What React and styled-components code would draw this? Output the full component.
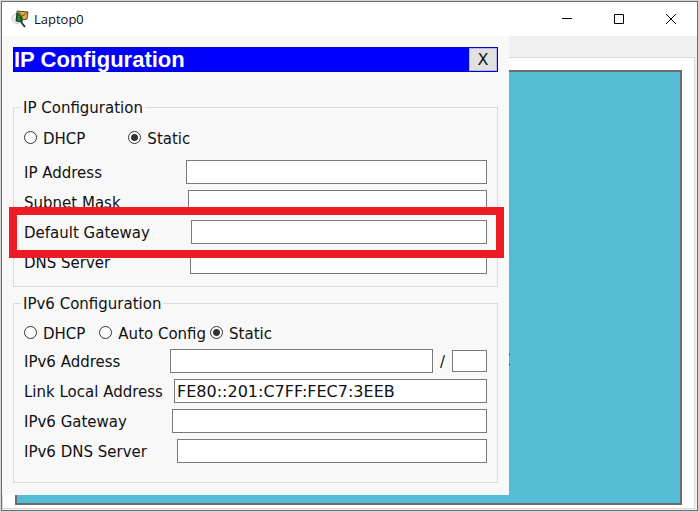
import React from "react";
import styled, { createGlobalStyle } from "styled-components";

const GlobalStyle = createGlobalStyle`
  *, *::before, *::after { box-sizing: border-box; }
  body {
    margin: 0;
    background: #d4d4d4;
    color: #111;
    font: 15px/20px "DejaVu Sans", sans-serif;
  }
`;

const Desktop = styled.div`
  display: flex;
  min-height: 100vh;
  padding: 1px;
`;

const Window = styled.main`
  display: flex;
  flex: 1;
  flex-direction: column;
  border: 1px solid #6e6e6e;
  background: #efefef;
`;

const TitleBar = styled.header`
  display: flex;
  align-items: center;
  height: 34px;
  padding-left: 9px;
  background: #fff;
`;

const AppIcon = styled.svg`
  width: 18px;
  height: 18px;
  margin-right: 5px;
`;

const WindowTitle = styled.h1`
  flex: 1;
  margin: 0;
  font: 13px/20px "Open Sans", sans-serif;
`;

const WindowButton = styled.button`
  display: grid;
  place-items: center;
  width: 52px;
  height: 34px;
  padding: 0;
  border: 0;
  background: none;
`;

const Workspace = styled.div`
  position: relative;
  display: flex;
  flex: 1;
  padding: 21px 2px 1px 0;
`;

const Pane = styled.div`
  display: flex;
  flex: 1;
  padding: 12px 12px 3px;
  border: 1px solid #d9d9d9;
  background: #fff;
`;

const Canvas = styled.div`
  flex: 1;
  border: 2px solid #6b6b6b;
  background: #54bdd4;
`;

const Dialog = styled.section`
  position: absolute;
  top: 0;
  left: 0;
  width: calc(100% - 188px);
  padding: 11px 11px 12px;
  background: #f8f8f8;

  &::after {
    content: "";
    position: absolute;
    right: -1px;
    bottom: 130px;
    width: 1px;
    height: 11px;
    border: solid #10282e;
    border-width: 1px 0;
  }
`;

const DialogHeader = styled.div`
  display: flex;
  justify-content: space-between;
  height: 25px;
  margin-bottom: 26px;
  border: 1px solid #0000c8;
  background: #0000ff;
`;

const DialogTitle = styled.h2`
  margin: 0;
  color: #fff;
  font: bold 22px/23px "Liberation Sans", sans-serif;
`;

const DialogClose = styled.button`
  width: 28px;
  padding: 0;
  border: 1px solid #b4b4ee;
  background: #e1e1e1;
  color: #111;
  font: 16px/20px "DejaVu Sans", sans-serif;
`;

const Group = styled.fieldset`
  min-width: 0;
  margin: 0 0 7px;
  padding: 0 10px 12px;
  border: 1px solid #dadada;

  &:last-child { margin-bottom: 0; padding-bottom: 19px; }
`;

const Legend = styled.legend`
  height: 19px;
  margin-left: -3px;
  padding: 0 2px;
`;

const Radios = styled.div`
  display: flex;
  height: 20px;
  margin: ${(p) => p.$margin};
`;

const RadioLabel = styled.label`
  display: flex;
  align-items: center;
  gap: 6px;
  margin-right: ${(p) => p.$space || 0}px;
  padding-top: 2px;
  white-space: nowrap;
`;

const Radio = styled.input`
  appearance: none;
  width: 13px;
  height: 13px;
  margin: 0 0 3px;
  border: 1px solid #333;
  border-radius: 50%;
  background: #fff;

  &:checked { background: radial-gradient(circle, #333 3px, #fff 4px); }
`;

const Fields = styled.div`
  display: grid;
  gap: 6px;
`;

const Row = styled.div`
  position: relative;
  display: flex;
  align-items: center;
  height: 24px;
`;

const FieldLabel = styled.label`
  flex: none;
  width: ${(p) => p.$width}px;
  padding-top: 2px;
  white-space: nowrap;
`;

const TextBox = styled.input`
  flex: 1;
  min-width: 0;
  height: 24px;
  padding: 0 2px;
  border: 1px solid #7a7a7a;
  border-radius: 0;
  background: #fff;
  color: #111;
  font: 16px/20px "DejaVu Sans", sans-serif;
`;

const PrefixBox = styled(TextBox)`
  flex: none;
  width: 35px;
  height: 22px;
`;

const Slash = styled.span`
  width: 19px;
  padding-top: 2px;
  text-align: center;
`;

const Highlight = styled.div`
  position: absolute;
  z-index: 1;
  inset: -13px -17px -14px -15px;
  border: 8px solid #ec1c24;
  pointer-events: none;
`;

function Option({ name, label, checked, space }) {
  return (
    <RadioLabel $space={space}>
      <Radio type="radio" name={name} defaultChecked={checked} />
      {label}
    </RadioLabel>
  );
}

function Field({ id, label, width, value, children }) {
  return (
    <Row>
      <FieldLabel htmlFor={id} $width={width}>{label}</FieldLabel>
      <TextBox id={id} defaultValue={value} />
      {children}
    </Row>
  );
}

export default function App() {
  return (
    <Desktop>
      <GlobalStyle />
      <Window>
        <TitleBar>
          <AppIcon viewBox="0 0 18 18" aria-hidden="true">
            <path d="M10 12l4 5" stroke="#333" strokeWidth="2" />
            <circle cx="6" cy="8.5" r="5" fill="#e9eeec" stroke="#c3cac8" />
            <path d="M6 1l11 1-1 7-5 1-5-5z" fill="#d8ac50" stroke="#5d4a20" />
            <path d="M7 2l5 4 4.500-4" fill="none" stroke="#6b521f" />
            <path d="M6 3l5 4v5l-6-1z" fill="#1d6b2c" stroke="#12401c" />
            <path d="M8 6v5" stroke="#39a04c" />
          </AppIcon>
          <WindowTitle>Laptop0</WindowTitle>
          <WindowButton aria-label="Minimize">
            <svg width="10" height="10"><path d="M0 4.5h10" stroke="#000" /></svg>
          </WindowButton>
          <WindowButton aria-label="Maximize">
            <svg width="10" height="10"><path d="M.5.5h9v9h-9z" fill="none" stroke="#000" /></svg>
          </WindowButton>
          <WindowButton aria-label="Close">
            <svg width="10" height="10"><path d="M0 0l10 10M10 0L0 10" stroke="#000" /></svg>
          </WindowButton>
        </TitleBar>
        <Workspace>
          <Pane><Canvas /></Pane>
          <Dialog>
            <DialogHeader>
              <DialogTitle>IP Configuration</DialogTitle>
              <DialogClose aria-label="Close dialog">X</DialogClose>
            </DialogHeader>
            <Group>
              <Legend>IP Configuration</Legend>
              <Radios $margin="11px 0 12px">
                <Option name="ipv4" label="DHCP" space={43} />
                <Option name="ipv4" label="Static" checked />
              </Radios>
              <Fields>
                <Field id="ip" label="IP Address" width={162} />
                <Field id="mask" label="Subnet Mask" width={164} />
                <Field id="gateway" label="Default Gateway" width={167}>
                  <Highlight />
                </Field>
                <Field id="dns" label="DNS Server" width={166} />
              </Fields>
            </Group>
            <Group>
              <Legend>IPv6 Configuration</Legend>
              <Radios $margin="10px 0 6px">
                <Option name="ipv6" label="DHCP" space={14} />
                <Option name="ipv6" label="Auto Config" space={4} />
                <Option name="ipv6" label="Static" checked />
              </Radios>
              <Fields>
                <Field id="ip6" label="IPv6 Address" width={146}>
                  <Slash>/</Slash>
                  <PrefixBox aria-label="Prefix length" />
                </Field>
                <Field id="link" label="Link Local Address" width={150} value="FE80::201:C7FF:FEC7:3EEB" />
                <Field id="gateway6" label="IPv6 Gateway" width={148} />
                <Field id="dns6" label="IPv6 DNS Server" width={153} />
              </Fields>
            </Group>
          </Dialog>
        </Workspace>
      </Window>
    </Desktop>
  );
}
